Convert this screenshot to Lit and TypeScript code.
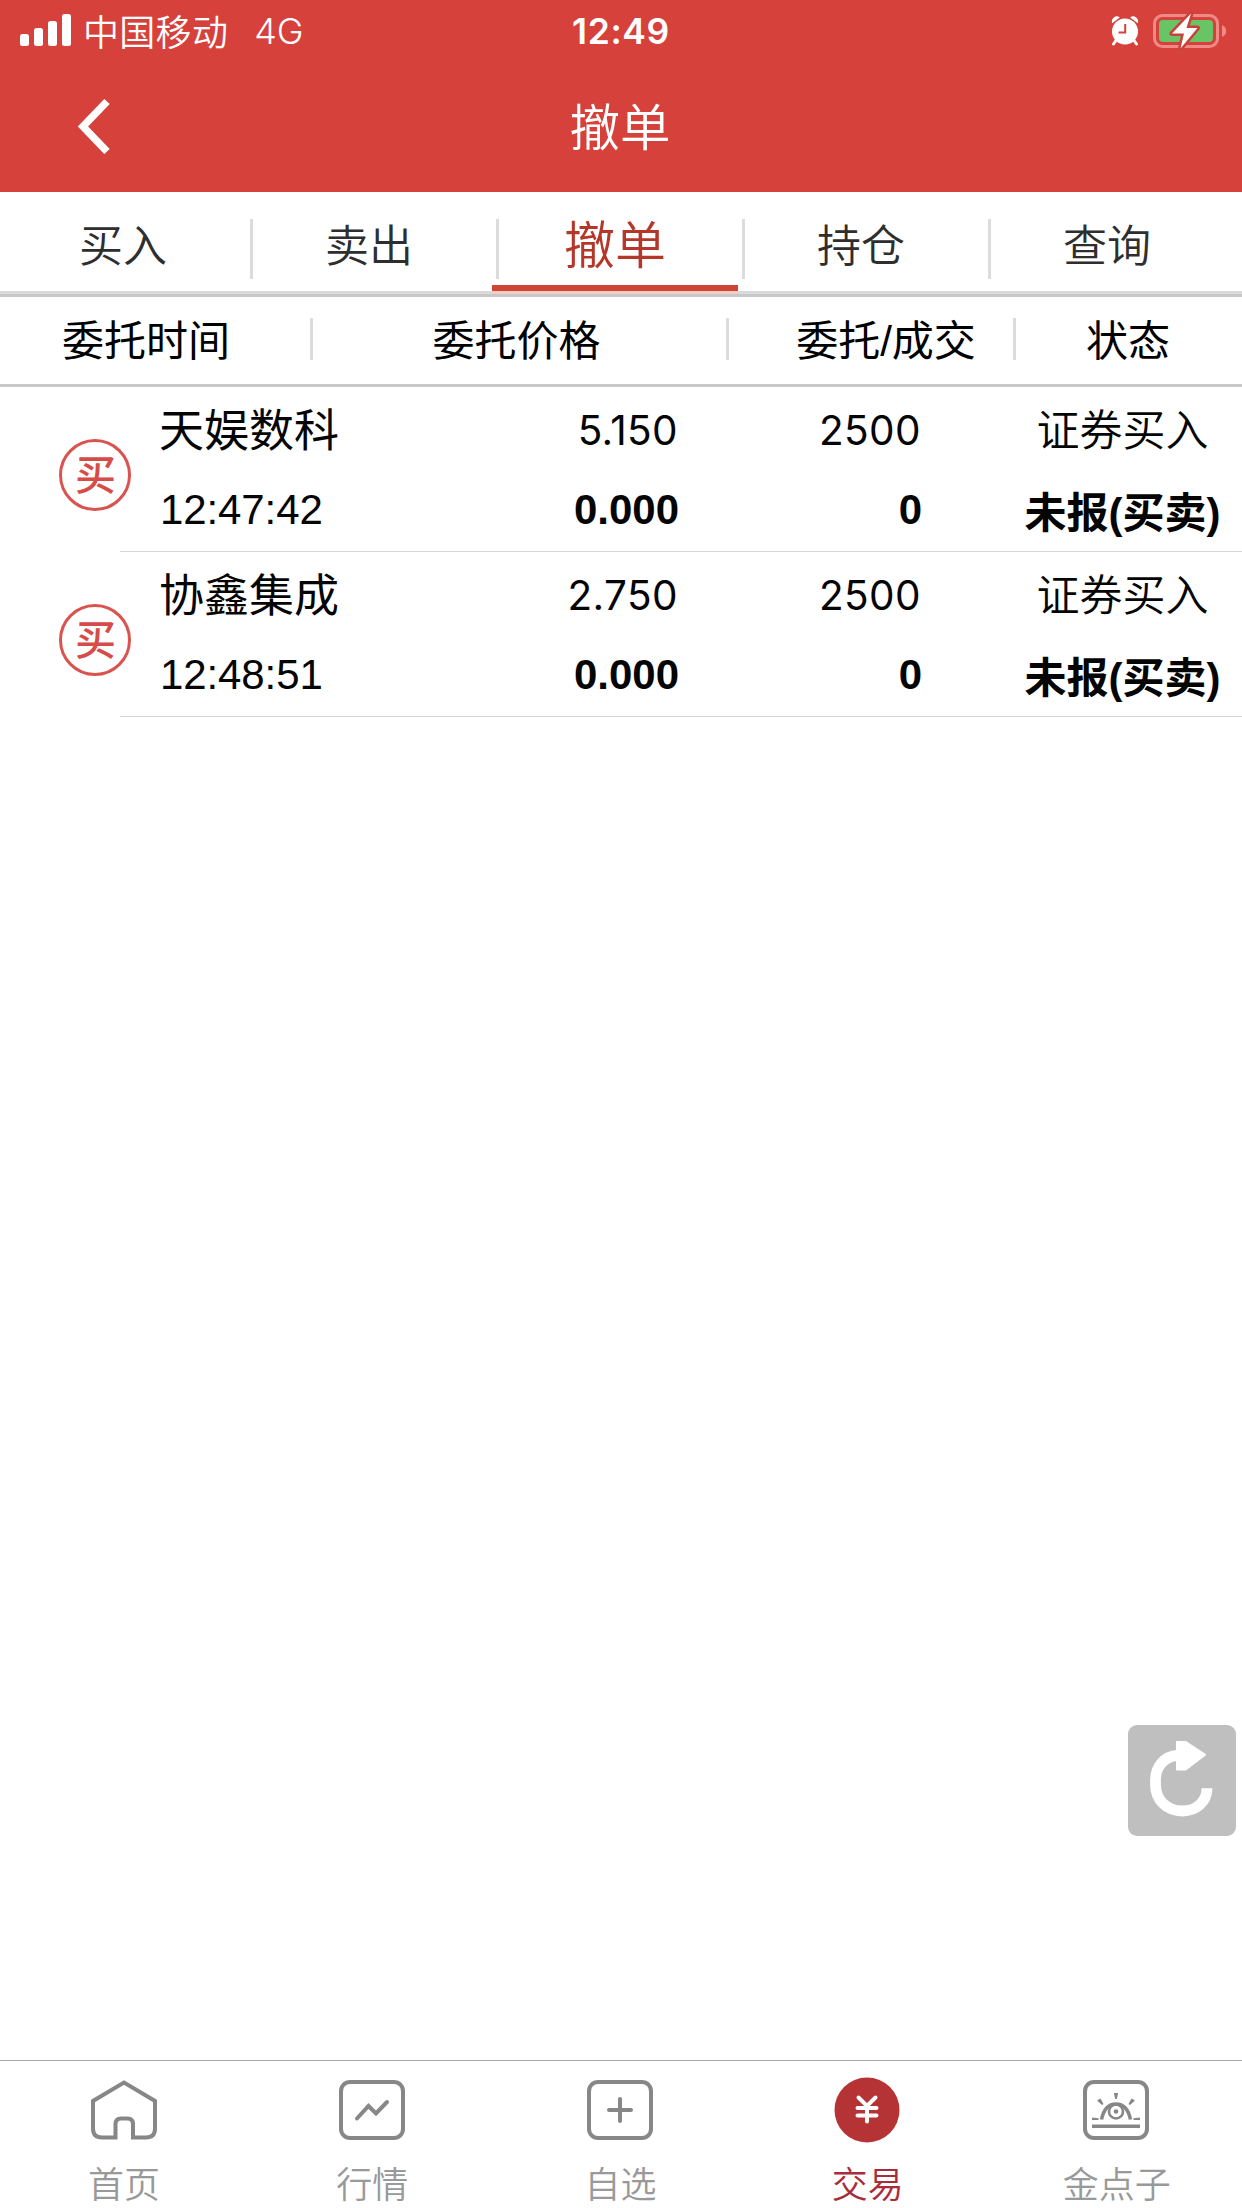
import { LitElement, html, svg, css } from "lit";
import { customElement, property } from "lit/decorators.js";
import { classMap } from "lit/directives/class-map.js";

interface Order {
  name: string;
  time: string;
  price: string;
  dealPrice: string;
  amount: string;
  dealAmount: string;
  kind: string;
  state: string;
}

const ORDERS: Order[] = [
  { name: "天娱数科", time: "12:47:42", price: "5.150", dealPrice: "0.000", amount: "2500", dealAmount: "0", kind: "证券买入", state: "未报(买卖)" },
  { name: "协鑫集成", time: "12:48:51", price: "2.750", dealPrice: "0.000", amount: "2500", dealAmount: "0", kind: "证券买入", state: "未报(买卖)" },
];

const TABS = ["买入", "卖出", "撤单", "持仓", "查询"];

const FRAME = svg`<rect x="2" y="2" width="62" height="56" rx="9"/>`;

const ICONS: Record<string, unknown> = {
  home: svg`<path d="M26 57.500H11Q2 57.500 2 48.500V21L33 2.500L64 21V48.500Q64 57.500 55 57.500H42V44Q42 38.500 36.500 38.500H30Q24.500 38.500 24.500 44V59.500"/>`,
  quote: svg`${FRAME}<path d="M18 38.500L29.500 26L37 33.500L48 22" stroke-linecap="round"/>`,
  pick: svg`${FRAME}<path d="M33 19V41M22 30H44" stroke-linecap="round"/>`,
  idea: svg`${FRAME}<path d="M9 46.200H57" stroke-width="3.600"/>
    <path d="M18.500 39.500C20.500 30 25.500 24 33 24S45.500 30 47.500 39.500" stroke-width="3.600"/>
    <circle cx="33" cy="31.500" r="7" stroke-width="2.600"/><circle cx="33" cy="31.500" r="2.300" fill="currentColor" stroke="none"/>
    <path d="M30.800 13H35.200L33.800 19H32.200ZM14 20.500L17.500 18.500L20.500 24L19 25ZM52 20.500L48.500 18.500L45.500 24L47 25ZM9 37.500L15.500 38.200V40H9ZM57 37.500L50.500 38.200V40H57Z" fill="currentColor" stroke="none"/>`,
};

@customElement("status-bar")
export class StatusBar extends LitElement {
  static styles = css`
    :host { display: grid; grid-template-columns: 1fr auto 1fr; align-items: center; height: 62px; color: #fff; }
    .left { display: flex; align-items: center; padding-left: 20px; }
    .signal { display: block; width: 52px; height: 32px; margin-top: -2px; }
    .carrier { font: 350 36px/50px "Noto Sans CJK SC", sans-serif; margin-left: 11px; letter-spacing: 0.3px; padding-bottom: 3px; }
    .net { font: 350 36px/50px Inter, sans-serif; margin-left: 26px; }
    .clock { font: 600 35.500px/50px Inter, sans-serif; letter-spacing: 0.6px; padding-top: 2px; }
    .right { display: flex; align-items: center; justify-content: flex-end; gap: 14px; padding: 0 15px 1px 0; }
    .alarm, .battery { display: block; }
  `;
  render() {
    return html`
      <div class="left">
        <svg class="signal" viewBox="0 0 52 32" fill="#fff">
          <rect x="0" y="20" width="9" height="12" rx="2.500" /><rect x="14" y="14" width="9" height="18" rx="2.500" />
          <rect x="28" y="7" width="9" height="25" rx="2.500" /><rect x="42" y="0" width="9" height="32" rx="2.500" />
        </svg>
        <span class="carrier">中国移动</span><span class="net">4G</span>
      </div>
      <span class="clock">12:49</span>
      <div class="right">
        <svg class="alarm" width="28" height="30" viewBox="0 0 28 30">
          <path d="M5 24.500L2.500 28M23 24.500L25.500 28" stroke="#fff" stroke-width="3" stroke-linecap="round" />
          <path d="M1.200 7.200A5 5 0 0 1 8.800 1.400ZM26.800 7.200A5 5 0 0 0 19.200 1.400Z" fill="#fff" />
          <circle cx="14" cy="15.500" r="13" fill="#fff" />
          <path d="M14.200 8V16.500H7.500" fill="none" stroke="#d4403a" stroke-width="2" />
        </svg>
        <svg class="battery" width="74" height="38" viewBox="0 0 74 38">
          <rect x="1.500" y="3.500" width="63" height="31" rx="8" fill="none" stroke="#f08a86" stroke-width="3" />
          <path d="M69 13Q73.200 15 73.200 19T69 25Z" fill="#f08a86" />
          <rect x="6" y="8" width="54" height="22" rx="4" fill="#68c465" />
          <path d="M38 1.500L19 21.500H31L27.500 36.500L44.500 16H33.500Z" fill="#fff" stroke="#c8423a" stroke-width="5" paint-order="stroke" stroke-linejoin="round" />
        </svg>
      </div>`;
  }
}

@customElement("order-row")
export class OrderRow extends LitElement {
  @property({ attribute: false }) order!: Order;
  static styles = css`
    :host { display: flex; height: 165px; color: #050505; }
    .side { width: 120px; box-sizing: border-box; padding: 52px 0 0 59px; }
    .badge { box-sizing: border-box; width: 72px; height: 72px; border: 3px solid #d9534f; border-radius: 50%; color: #d64c48;
      display: flex; align-items: center; justify-content: center; font: 500 41px/60px "Noto Sans CJK SC", sans-serif; padding: 0 0 7px 1px; }
    .body { flex: 1; display: grid; grid-template-columns: 280px 240px 243px 1fr; box-sizing: border-box; border-bottom: 1px solid #d6d6d6; padding-left: 39px; }
    .col { display: flex; flex-direction: column; white-space: nowrap; }
    .right { align-items: flex-end; }
    .last { align-items: center; padding-left: 81px; }
    .name { font: 400 45px/60px "Noto Sans CJK SC", sans-serif; padding-top: 11px; }
    .time { font: 400 42px/48px "Liberation Sans", sans-serif; padding: 28px 0 0 1px; letter-spacing: -0.1px; }
    .num { font: 400 40.500px/60px Inter, sans-serif; letter-spacing: 0.4px; padding: 14px 1px 0 0; }
    .bold { font: 700 42px/48px "Liberation Sans", sans-serif; padding-top: 25px; }
    .kind { font: 350 43px/60px "Noto Sans CJK SC", sans-serif; padding-top: 10px; }
    .state { font: 600 42px/60px "Liberation Sans", "Noto Sans CJK SC", sans-serif; padding-top: 27px; }
  `;
  render() {
    const o = this.order;
    return html`
      <div class="side"><div class="badge">买</div></div>
      <div class="body">
        <div class="col"><span class="name">${o.name}</span><span class="time">${o.time}</span></div>
        <div class="col right"><span class="num">${o.price}</span><span class="bold">${o.dealPrice}</span></div>
        <div class="col right"><span class="num">${o.amount}</span><span class="bold">${o.dealAmount}</span></div>
        <div class="col last"><span class="kind">${o.kind}</span><span class="state">${o.state}</span></div>
      </div>`;
  }
}

@customElement("nav-item")
export class NavItem extends LitElement {
  @property() icon = "";
  @property() label = "";
  static styles = css`
    :host { display: flex; flex-direction: column; align-items: center; }
    .slot { height: 96px; display: flex; align-items: flex-start; padding: 19px 1px 0 0; box-sizing: border-box; }
    .active { padding: 16px 4px 0 0; }
    .glyph { display: block; color: #878787; }
    .label { font: 350 36px/50px "Noto Sans CJK SC", sans-serif; color: #999; }
    .on { color: #aa2c3a; padding-right: 2px; }
  `;
  render() {
    const active = this.icon === "trade";
    return html`
      <div class=${classMap({ slot: true, active })}>
        ${active
          ? html`<svg class="glyph" width="66" height="66" viewBox="0 0 66 66">
              <circle cx="33" cy="33" r="32.500" fill="#b63335" />
              <path d="M24.500 20.500L33 29L41.500 20.500M23.500 31H42.500M23.500 38.500H42.500M33 30V44.500" fill="none" stroke="#fff" stroke-width="4" stroke-linecap="round" />
            </svg>`
          : html`<svg class="glyph" width="66" height="60" viewBox="0 0 66 60" fill="none" stroke="currentColor" stroke-width="4">${ICONS[this.icon]}</svg>`}
      </div>
      <span class=${classMap({ label: true, on: active })}>${this.label}</span>`;
  }
}

@customElement("app-root")
export class AppRoot extends LitElement {
  static styles = css`
    :host { display: flex; flex-direction: column; position: relative; width: 1242px; height: 2208px; overflow: hidden; background: #fff; font-family: "Noto Sans CJK SC", sans-serif; }
    .top { height: 192px; background: #d6413b; flex: none; }
    .bar { display: grid; grid-template-columns: 1fr auto 1fr; align-items: center; height: 130px; color: #fff; }
    .back { display: block; margin: -2px 0 0 76px; }
    .title { font: 350 50.500px/70px "Noto Sans CJK SC", sans-serif; padding: 0 2px 6px 0; }
    .tabs { display: flex; height: 99px; flex: none; background: #fff; }
    .tab { width: 246px; box-sizing: border-box; display: flex; flex-direction: column; align-items: center; justify-content: center;
      font-size: 44px; font-weight: 350; line-height: 60px; color: #2e2e2e; padding-top: 8px; border-bottom: 6px solid transparent; }
    .selected { font-size: 51px; color: #b5372a; border-bottom-color: #d04436; padding-top: 6px; }
    .split { width: 3px; height: 60px; margin: 27px -7px 0 4px; background: #dcdcdc; flex: none; }
    .rule { height: 3px; flex: none; background: #dadada; border-bottom: 3px solid #c8c8c8; display: flex; }
    .tint { width: 246px; margin-left: 492px; background: #f0cfc2; }
    .heads { display: flex; align-items: center; height: 87px; flex: none; border-bottom: 3px solid #c8c8c8; color: #000; font-family: "Liberation Sans", "Noto Sans CJK SC", sans-serif; font-size: 42px; line-height: 60px; white-space: nowrap; }
    .head { display: flex; justify-content: center; box-sizing: border-box; padding-top: 2px; }
    .h1 { width: 310px; padding-right: 18px; }
    .h2 { width: 413px; padding-right: 6px; }
    .h3 { width: 284px; padding-left: 30px; }
    .h4 { flex: 1; padding-right: 2px; }
    .line { width: 3px; height: 42px; background: #dcdcdc; margin-top: -3px; flex: none; }
    .list { flex: 1; }
    .refresh { position: absolute; left: 1128px; top: 1725px; width: 108px; height: 111px; border-radius: 9px; background: #bfbfbf; }
    .nav { display: grid; grid-template-columns: repeat(5, 248.200px); height: 147px; flex: none; border-top: 1px solid #a8a8a8; background: #fff; }
  `;
  render() {
    return html`
      <header class="top">
        <status-bar></status-bar>
        <div class="bar">
          <svg class="back" width="36" height="56" viewBox="0 0 36 56" fill="none" stroke="#fff" stroke-width="7.500"><path d="M31 3.500L7 28.500L31 53.500" /></svg>
          <span class="title">撤单</span>
        </div>
      </header>
      <nav class="tabs">
        ${TABS.map((t, i) => html`${i ? html`<span class="split"></span>` : ""}<div class=${classMap({ tab: true, selected: t === "撤单" })}>${t}</div>`)}
      </nav>
      <div class="rule"><div class="tint"></div></div>
      <div class="heads">
        <div class="head h1">委托时间</div><span class="line"></span>
        <div class="head h2">委托价格</div><span class="line"></span>
        <div class="head h3">委托/成交</div><span class="line"></span>
        <div class="head h4">状态</div>
      </div>
      <main class="list">${ORDERS.map((o) => html`<order-row .order=${o}></order-row>`)}</main>
      <svg class="refresh" viewBox="0 0 108 111">
        <path d="M79 63.300C79 77 68 86 54.500 86C39 86 27.500 75 27.500 60V55C27.500 42 36 31.500 49 30.500" fill="none" stroke="#fff" stroke-width="10.800" />
        <path d="M48.500 16.500H58L78 29.700L58 45H48.500Z" fill="#fff" stroke="#fff" stroke-linejoin="round" />
      </svg>
      <footer class="nav">
        <nav-item icon="home" label="首页"></nav-item>
        <nav-item icon="quote" label="行情"></nav-item>
        <nav-item icon="pick" label="自选"></nav-item>
        <nav-item icon="trade" label="交易"></nav-item>
        <nav-item icon="idea" label="金点子"></nav-item>
      </footer>`;
  }
}
